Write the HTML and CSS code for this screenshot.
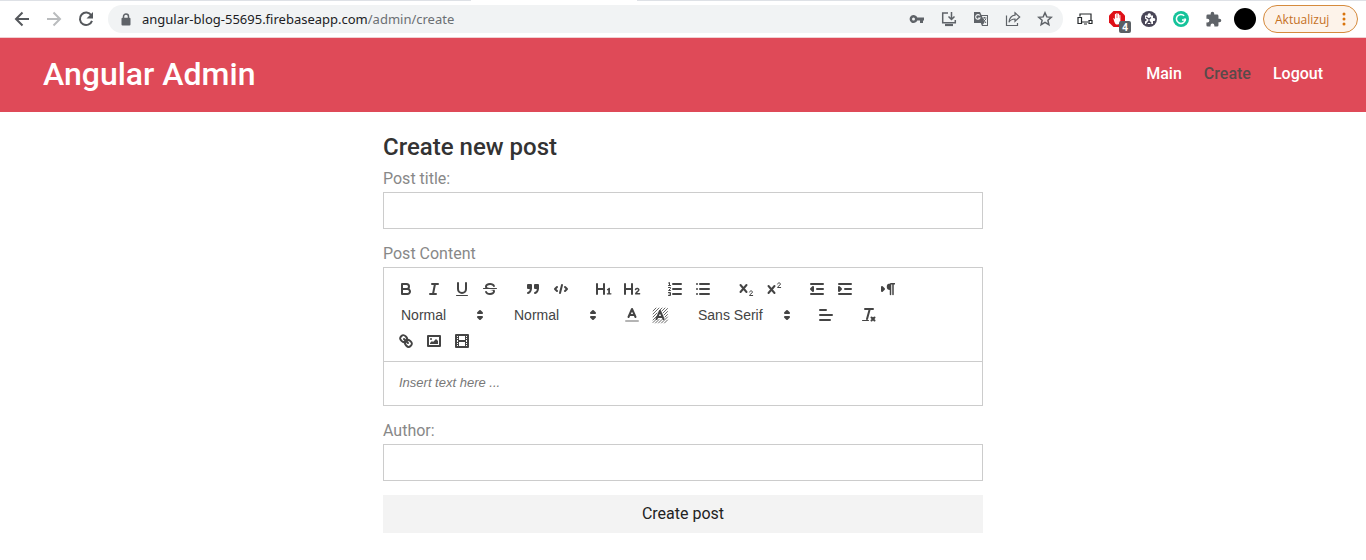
FILE: index.html
```html
<!DOCTYPE html>
<html lang="en">
<head>
<meta charset="utf-8">
<meta name="viewport" content="width=device-width, initial-scale=1">
<title>Angular Admin</title>
<link rel="stylesheet" href="styles.css">
</head>
<body>
<div class="browser">
  <div class="tab-strip"><span class="tab-active"></span></div>
  <div class="browser-bar">
    <div class="icon-row">
      <button class="bar-button" type="button" aria-label="Back"><svg width="16" height="16" viewBox="0 0 16 16" fill="none" stroke="#55585c" stroke-width="2"><path d="M15 8H2.500M8.500 1.500L2 8l6.500 6.500"/></svg></button>
      <button class="bar-button" type="button" aria-label="Forward"><svg width="16" height="16" viewBox="0 0 16 16" fill="none" stroke="#babcbe" stroke-width="2"><path d="M1 8h12.500M7.500 1.500L14 8l-6.500 6.500"/></svg></button>
      <button class="bar-button" type="button" aria-label="Reload"><svg width="16" height="16" viewBox="0 0 16 16"><path d="M13.300 4.300A6.200 6.200 0 1 0 14 9.800" fill="none" stroke="#55585c" stroke-width="2"/><path d="M15 1v6.500H8.500z" fill="#55585c"/></svg></button>
    </div>
    <div class="omnibox">
      <svg class="lock" width="10" height="13" viewBox="0 0 10 13"><path d="M2.500 5.500V3.500a2.500 2.500 0 0 1 5 0v2" fill="none" stroke="#5f6368" stroke-width="1.500"/><rect x="0.500" y="4.700" width="9" height="7.800" rx="1" fill="#5f6368"/></svg>
      <span class="url">angular-blog-55695.firebaseapp.com<span class="url-path">/admin/create</span></span>
      <div class="icon-row">
        <button class="bar-button" type="button" aria-label="Passwords"><svg width="16" height="16" viewBox="0 0 16 16"><path fill="#5f6368" fill-rule="evenodd" d="M8.300 6.500a4 4 0 1 0 0 3H11V12h3V9.500h1v-3zM4.500 6.500a1.500 1.500 0 1 1 0 3 1.500 1.500 0 0 1 0-3z"/></svg></button>
        <button class="bar-button" type="button" aria-label="Install app"><svg width="16" height="16" viewBox="0 0 16 16" fill="none" stroke="#5f6368" stroke-width="1.500"><path d="M7 2H1.700v9.800h12.600V9M10.500 1v7M7.500 5.500l3 3 3-3"/><path d="M4 14h8" stroke-width="2.200"/></svg></button>
        <button class="bar-button" type="button" aria-label="Translate"><svg width="16" height="16" viewBox="0 0 16 16"><path d="M1 1h6l1.500 3H15v11H9l-1.200-3H1z" fill="#5f6368"/><path d="M8.900 5H14v9H9.500l2-2.500z" fill="#f1f3f4"/><path d="M6.800 4.500A2.300 2.300 0 1 0 7 7H5.200" fill="none" stroke="#f1f3f4" stroke-width="1.100"/><path d="M9.500 7h4M11.500 6v1M10 8l3 4M13 8l-3 3" stroke="#5f6368" fill="none"/></svg></button>
        <button class="bar-button" type="button" aria-label="Share"><svg width="16" height="16" viewBox="0 0 16 16" fill="none" stroke="#5f6368" stroke-width="1.200"><path d="M1.500 4.500v10h11v-2.500"/><path d="M10 1.800l4.700 4.200L10 10.300V8C7 8 5.200 9 4 11.200 4.400 7.200 6.500 4.600 10 4.200z"/></svg></button>
        <button class="bar-button" type="button" aria-label="Bookmark"><svg width="16" height="16" viewBox="0 0 16 16" fill="none" stroke="#5f6368" stroke-width="1.500"><path d="M8 1.800l1.800 4.100 4.500.4-3.400 3 1 4.400L8 11.400l-3.900 2.300 1-4.400-3.400-3 4.500-.4z"/></svg></button>
      </div>
    </div>
    <div class="icon-row">
      <button class="bar-button" type="button" aria-label="Devices"><svg width="16" height="16" viewBox="0 0 16 16" fill="none" stroke="#25282b" stroke-width="1.200"><path d="M3 5.500V3h11v6M5 11h6M7 13h3"/><path d="M1 6.500h3.500v6H1zM12 9.500h3v3h-3z"/></svg></button>
      <button class="bar-button" type="button" aria-label="Ad blocker"><svg width="18" height="18" viewBox="0 0 18 18"><path d="M5.500 1h7L17 5.500v7L12.500 17h-7L1 12.500v-7z" fill="#df1018"/><path d="M5.200 8.200c.8-.3 1.200.4 1.700 1V4.400c0-.8 1.100-.8 1.100 0V8h.3V3.600c0-.8 1.200-.8 1.200 0V8h.3V4c0-.8 1.200-.8 1.200 0v4.300h.3V5.400c0-.8 1.100-.8 1.100 0V11c0 2-1.100 3.600-2.900 3.600-2.600 0-3-2.600-4.300-6.400z" fill="#fff"/></svg><span class="badge">4</span></button>
      <button class="bar-button" type="button" aria-label="Extension"><svg width="16" height="16" viewBox="0 0 16 16"><circle cx="8" cy="8" r="8" fill="#494657"/><path d="M4 4.500h2.800a1.600 1.600 0 1 1 3 0H12v2.800a1.500 1.500 0 1 1 0 2.600V13H4V10.500l2-1.500-2-1.500z" fill="#fff"/><path d="M5 6l3 2v2l-2.500 3M8 8l2-1.500M8 10l2.200 2.500" fill="none" stroke="#494657" stroke-width="1.200"/></svg></button>
      <button class="bar-button" type="button" aria-label="Grammar"><svg width="16" height="16" viewBox="0 0 16 16"><circle cx="8" cy="8" r="8" fill="#15c39a"/><path d="M11.200 4.800A4.500 4.500 0 1 0 12.300 9H9" fill="none" stroke="#fff" stroke-width="1.500"/><path d="M10.500 7.500h2.500v2.500z" fill="#fff"/></svg></button>
      <button class="bar-button" type="button" aria-label="Extensions"><svg width="17" height="17" viewBox="0 0 24 24"><path fill="#5f6368" d="M20.500 11H19V7a2 2 0 0 0-2-2h-4V3.500a2.500 2.500 0 0 0-5 0V5H4a2 2 0 0 0-2 2v3.800h1.500a2.700 2.700 0 0 1 0 5.400H2V20a2 2 0 0 0 2 2h3.800v-1.500a2.700 2.700 0 0 1 5.400 0V22H17a2 2 0 0 0 2-2v-4h1.500a2.500 2.500 0 0 0 0-5z"/></svg></button>
      <button class="bar-button" type="button" aria-label="Profile"><svg width="22" height="22" viewBox="0 0 22 22"><circle cx="11" cy="11" r="11"/></svg></button>
    </div>
    <button class="update" type="button">Aktualizuj<svg width="4" height="14" viewBox="0 0 4 14" fill="#d9730b"><circle cx="2" cy="2" r="1.500"/><circle cx="2" cy="7" r="1.500"/><circle cx="2" cy="12" r="1.500"/></svg></button>
  </div>
</div>

<header class="site-header">
  <h1 class="brand">Angular Admin</h1>
  <nav class="nav">
    <a class="nav-link" href="#main">Main</a>
    <a class="nav-link nav-link-active" href="#create">Create</a>
    <a class="nav-link" href="#logout">Logout</a>
  </nav>
</header>

<main class="page">
  <form class="post-form">
    <h2 class="form-title">Create new post</h2>
    <div class="field">
      <label class="label" for="title">Post title:</label>
      <input class="input" id="title" type="text">
    </div>
    <div class="field">
      <label class="label" for="content">Post Content</label>
      <div class="editor">
        <div class="toolbar">
          <div class="group">
            <button class="tool" type="button" aria-label="Bold"><svg viewBox="0 0 18 18"><path class="st" d="M5,4H9.500A2.500,2.500,0,0,1,12,6.500v0A2.500,2.500,0,0,1,9.500,9H5A0,0,0,0,1,5,9V4A0,0,0,0,1,5,4Z"/><path class="st" d="M5,9h5.500A2.500,2.500,0,0,1,13,11.500v0A2.500,2.500,0,0,1,10.500,14H5a0,0,0,0,1,0,0V9A0,0,0,0,1,5,9Z"/></svg></button>
            <button class="tool" type="button" aria-label="Italic"><svg viewBox="0 0 18 18"><path class="st" d="M7 4h6M5 14h6M8 14l2-10"/></svg></button>
            <button class="tool" type="button" aria-label="Underline"><svg viewBox="0 0 18 18"><path class="st" d="M5,3V9a4.012,4.012,0,0,0,4,4H9a4.012,4.012,0,0,0,4-4V3"/><rect class="fi" x="3" y="15" width="12" height="1" rx=".5"/></svg></button>
            <button class="tool" type="button" aria-label="Strike"><svg viewBox="0 0 18 18"><path class="st thin" d="M15.500 8.500h-13"/><path class="fi" d="M9.007,8C6.542,7.791,6,7.519,6,6.500,6,5.792,7.283,5,9,5c1.571,0,2.765.679,2.969,1.309a1,1,0,0,0,1.900-.617C13.356,4.106,11.354,3,9,3,6.200,3,4,4.538,4,6.500a3.200,3.200,0,0,0,.5,1.843Z"/><path class="fi" d="M8.984,10C11.457,10.208,12,10.479,12,11.500c0,.708-1.283,1.500-3,1.500-1.571,0-2.765-.679-2.969-1.309a1,1,0,1,0-1.900.617C4.644,13.894,6.646,15,9,15c2.800,0,5-1.538,5-3.500a3.200,3.200,0,0,0-.5-1.843Z"/></svg></button>
          </div>
          <div class="group">
            <button class="tool" type="button" aria-label="Blockquote"><svg viewBox="0 0 18 18"><path class="fi st" d="M4 5h3v3H4zM11 5h3v3h-3z"/><path class="st" d="M7,8c0,4.031-3,5-3,5M14,8c0,4.031-3,5-3,5"/></svg></button>
            <button class="tool" type="button" aria-label="Code block"><svg viewBox="0 0 18 18"><path class="st" d="M5 7L3 9l2 2M13 7l2 2-2 2M10 5L8 13"/></svg></button>
          </div>
          <div class="group">
            <button class="tool" type="button" aria-label="Heading 1"><svg viewBox="0 0 18 18"><path class="fi" d="M10,4V14a1,1,0,0,1-2,0V10H3v4a1,1,0,0,1-2,0V4A1,1,0,0,1,3,4V8H8V4a1,1,0,0,1,2,0Zm6.068,9.209H14.981V8.244a.387.387,0,0,0-.385-.385h-.638a.4.400,0,0,0-.264.111L12.100,9.353a.380.380,0,0,0-.11.550l.34.354a.367.367,0,0,0,.539.010l.319-.275v3.217H12.109a.389.389,0,0,0-.385.400v.4a.382.382,0,0,0,.385.400h3.959a.382.382,0,0,0,.385-.4v-.4A.389.389,0,0,0,16.068,13.209Z"/></svg></button>
            <button class="tool" type="button" aria-label="Heading 2"><svg viewBox="0 0 18 18"><path class="fi" d="M10,4V14a1,1,0,0,1-2,0V10H3v4a1,1,0,0,1-2,0V4A1,1,0,0,1,3,4V8H8V4a1,1,0,0,1,2,0Z"/><path class="st medium" d="M12.500 9.500c.4-1.500 3.600-1.300 3.300.5-.2 1.300-2.900 2.100-3.100 3.800h3.900"/></svg></button>
          </div>
          <div class="group">
            <button class="tool" type="button" aria-label="Ordered list"><svg viewBox="0 0 18 18"><path class="st" d="M7 4h8M7 9h8M7 14h8"/><path class="st thin" d="M2.500 5.500h2M3.500 5.500V2.500L2.500 3M2.500 7.500h2v1l-2 2h2M2.500 12.500h2v3h-2M3 14h1.500"/></svg></button>
            <button class="tool" type="button" aria-label="Bullet list"><svg viewBox="0 0 18 18"><path class="st" d="M6 4h9M6 9h9M6 14h9M3 4h0M3 9h0M3 14h0"/></svg></button>
          </div>
          <div class="group">
            <button class="tool" type="button" aria-label="Subscript"><svg viewBox="0 0 18 18"><path class="st" d="M3.500 5l6 7M9.500 5l-6 7"/><path class="st thin" d="M12.500 12c.3-1.700 3.200-1.500 2.900.3-.2 1.100-2.500 1.700-2.900 3.200h3.200"/></svg></button>
            <button class="tool" type="button" aria-label="Superscript"><svg viewBox="0 0 18 18"><path class="st" d="M3.500 6l6 7M9.500 6l-6 7"/><path class="st thin" d="M12.500 4c.3-1.700 3.200-1.500 2.900.3-.2 1.100-2.500 1.700-2.900 3.200h3.200"/></svg></button>
          </div>
          <div class="group">
            <button class="tool" type="button" aria-label="Outdent"><svg viewBox="0 0 18 18"><path class="st" d="M3 14h12M3 4h12M9 9h6"/><path class="fi st" d="M5 7v4L3 9z"/></svg></button>
            <button class="tool" type="button" aria-label="Indent"><svg viewBox="0 0 18 18"><path class="st" d="M3 14h12M3 4h12M9 9h6"/><path class="fi st" d="M3 7v4l2-2z"/></svg></button>
          </div>
          <div class="group">
            <button class="tool" type="button" aria-label="Text direction"><svg viewBox="0 0 18 18"><path class="fi st" d="M3 11l2-2-2-2z"/><path class="fi" d="M11 3.500a3 3 0 0 0 0 6.500h1V3.500zM11 3h5v1.500h-5z"/><path class="st medium" d="M11.500 4v10.500M14 4v10.500"/></svg></button>
          </div>
          <div class="group">
            <div class="picker">
              <select class="select" aria-label="Heading"><option>Normal</option><option>Heading 1</option><option>Heading 2</option></select>
              <svg class="picker-arrows" viewBox="0 0 18 18"><path class="fi st" d="M7 11l2 2 2-2zM7 7l2-2 2 2z"/></svg>
            </div>
          </div>
          <div class="group">
            <div class="picker">
              <select class="select" aria-label="Size"><option>Normal</option><option>Small</option><option>Large</option></select>
              <svg class="picker-arrows" viewBox="0 0 18 18"><path class="fi st" d="M7 11l2 2 2-2zM7 7l2-2 2 2z"/></svg>
            </div>
          </div>
          <div class="group">
            <button class="tool" type="button" aria-label="Text color"><svg viewBox="0 0 18 18"><path class="st faint" d="M3 15h12"/><path class="st" d="M5.500 11L9 3l3.500 8M11.630 9H6.380"/></svg></button>
            <button class="tool" type="button" aria-label="Background color"><svg viewBox="0 0 18 18"><path class="st hatch" d="M2 5l3-3M2 8l6-6M2 11l4-4M8 5l3-3M2 14l4-4M11 5l3-3M2 16.500l3-3M4.500 17l3.500-3.500M12 7l4.500-4.500M7.500 17l3.500-3.500M13 9l3.500-3.500M10.500 17l6-6M13.500 17l3-3M14 11l2.500-2.500"/><path class="st" d="M5.500 13L9 5l3.500 8M11.630 11H6.380"/></svg></button>
          </div>
          <div class="group">
            <div class="picker picker-font">
              <select class="select" aria-label="Font"><option>Sans Serif</option><option>Serif</option><option>Monospace</option></select>
              <svg class="picker-arrows" viewBox="0 0 18 18"><path class="fi st" d="M7 11l2 2 2-2zM7 7l2-2 2 2z"/></svg>
            </div>
          </div>
          <div class="group">
            <button class="tool" type="button" aria-label="Align"><svg viewBox="0 0 18 18"><path class="st" d="M3 9h12M3 14h10M3 4h6"/></svg></button>
          </div>
          <div class="group">
            <button class="tool" type="button" aria-label="Clear formatting"><svg viewBox="0 0 18 18"><path class="st" d="M5 3h8M7 13L9.500 4M11.500 11.500l3 3M14.500 11.500l-3 3"/><rect class="fi" x="2" y="14" width="7" height="1" rx=".5"/></svg></button>
          </div>
          <div class="group">
            <button class="tool" type="button" aria-label="Link"><svg viewBox="0 0 18 18"><path class="st" d="M7 7l4 4"/><path class="st" d="M8.900,4.577a3.476,3.476,0,0,1,.36,4.679A3.476,3.476,0,0,1,4.577,8.900C3.185,7.500,2.035,6.400,4.217,4.217S7.500,3.185,8.900,4.577Z"/><path class="st" d="M13.423,9.100a3.476,3.476,0,0,0-4.679-.36,3.476,3.476,0,0,0,.36,4.679c1.392,1.392,2.500,2.542,4.679.36S14.815,10.500,13.423,9.100Z"/></svg></button>
            <button class="tool" type="button" aria-label="Image"><svg viewBox="0 0 18 18"><rect class="st" x="3" y="4" width="12" height="10"/><circle class="fi" cx="6" cy="7" r="1"/><path class="fi" d="M5 12V11L7 9 8 10 11 7 13 9v3z"/></svg></button>
            <button class="tool" type="button" aria-label="Video"><svg viewBox="0 0 18 18"><rect class="st" x="3" y="3" width="12" height="12"/><path class="fi" d="M5 3h1v12H5zM12 3h1v12h-1zM5 8h8v2H5zM3 5h3v1H3zM3 7h3v1H3zM3 10h3v1H3zM3 12h3v1H3zM12 5h3v1h-3zM12 7h3v1h-3zM12 10h3v1h-3zM12 12h3v1h-3z"/></svg></button>
          </div>
        </div>
        <textarea class="editor-text" id="content" rows="1" placeholder="Insert text here ..."></textarea>
      </div>
    </div>
    <div class="field">
      <label class="label" for="author">Author:</label>
      <input class="input" id="author" type="text">
    </div>
    <button class="submit" type="submit">Create post</button>
  </form>
</main>
</body>
</html>
```
FILE: styles.css
```css
* {
  box-sizing: border-box;
}

body {
  margin: 0;
  background: #fff;
  color: #333;
  font-family: Roboto, "Liberation Sans", sans-serif;
  font-size: 16px;
}

button,
input,
select,
textarea {
  font: inherit;
  margin: 0;
}

svg {
  display: block;
}

/* Browser bar */
.browser {
  border-bottom: 1px solid #f0d0d3;
  font-family: "Noto Sans", "Open Sans", sans-serif;
}

.tab-strip {
  display: flex;
  height: 1px;
  padding-left: 471px;
  background: #dee1e6;
}

.tab-active {
  width: 166px;
  background: #fff;
}

.browser-bar {
  display: flex;
  align-items: center;
  gap: 6px;
  padding: 4px 8px 4px 6px;
}

.icon-row {
  display: flex;
}

.bar-button {
  position: relative;
  display: flex;
  align-items: center;
  justify-content: center;
  width: 32px;
  height: 28px;
  padding: 0;
  border: 0;
  background: none;
}

.omnibox {
  display: flex;
  flex: 1;
  align-items: center;
  min-width: 0;
  height: 28px;
  padding: 0 2px 0 13px;
  border-radius: 14px;
  background: #f1f3f4;
}

.lock {
  margin-right: 11px;
}

.url {
  flex: 1;
  overflow: hidden;
  color: #202124;
  font-size: 13px;
  line-height: 20px;
  white-space: nowrap;
}

.url-path {
  color: #6b6f73;
}

.badge {
  position: absolute;
  right: 2px;
  bottom: 0;
  width: 12px;
  border-radius: 2px;
  background: #5a5f64;
  color: #fff;
  font-size: 10px;
  font-weight: 700;
  line-height: 12px;
  text-align: center;
}

.update {
  display: flex;
  align-items: center;
  justify-content: space-between;
  width: 95px;
  height: 28px;
  margin-left: -4px;
  padding: 0 11px;
  border: 1px solid #d58a3c;
  border-radius: 14px;
  background: #fdf3ea;
  color: #c5701f;
  font-family: "Open Sans", "Noto Sans", sans-serif;
  font-size: 12px;
}

/* Site header */
.site-header {
  display: flex;
  align-items: center;
  justify-content: space-between;
  padding: 15px 43px 17px;
  background: #df4a58;
}

.brand {
  margin: 0;
  color: #fff;
  font-size: 32px;
  font-weight: 500;
  line-height: 42px;
}

.nav {
  display: flex;
  gap: 22px;
}

.nav-link {
  color: #fff;
  font-weight: 500;
  line-height: 22px;
  text-decoration: none;
}

.nav-link-active {
  color: #5a4a4a;
}

/* Form */
.page {
  padding: 20px 16px;
}

.post-form {
  max-width: 600px;
  margin: 0 auto;
}

.form-title {
  margin: 0 0 6px;
  font-size: 24px;
  font-weight: 500;
  line-height: 30px;
}

.field {
  margin-bottom: 14px;
}

.label {
  display: block;
  margin-bottom: 2px;
  color: #888;
  line-height: 22px;
}

.input {
  display: block;
  width: 100%;
  height: 37px;
  padding: 8px;
  border: 1px solid #ccc;
  border-radius: 0;
}

.editor {
  border: 1px solid #ccc;
  font-family: "Liberation Sans", Arial, sans-serif;
}

.toolbar {
  display: flex;
  flex-wrap: wrap;
  gap: 2px 15px;
  padding: 9px 60px 8px 8px;
  border-bottom: 1px solid #ccc;
}

.group {
  display: flex;
}

.tool {
  width: 28px;
  height: 24px;
  padding: 3px 5px;
  border: 0;
  background: none;
}

.st {
  fill: none;
  stroke: #444;
  stroke-width: 2;
  stroke-linecap: round;
  stroke-linejoin: round;
}

.fi,
.fi.st {
  fill: #444;
}

.medium {
  stroke-width: 1.5;
}

.thin {
  stroke-width: 1;
}

.hatch {
  stroke-width: 1;
  opacity: 0.8;
}

.faint {
  opacity: 0.4;
}

.picker {
  position: relative;
  width: 98px;
  height: 24px;
}

.picker-font {
  width: 108px;
}

.select {
  width: 100%;
  height: 24px;
  padding: 0 20px 0 9px;
  border: 0;
  appearance: none;
  background: none;
  color: #444;
  font-size: 14px;
}

.picker-arrows {
  position: absolute;
  top: 3px;
  right: 1px;
  width: 18px;
  height: 18px;
  pointer-events: none;
}

.editor-text {
  display: block;
  width: 100%;
  height: 43px;
  padding: 12px 15px;
  border: 0;
  resize: none;
  background: none;
  font-size: 13px;
  line-height: 18px;
}

.editor-text::placeholder {
  color: #777;
  font-style: italic;
}

.submit {
  width: 100%;
  padding: 9px;
  border: 0;
  background: #f3f3f3;
  color: #222;
  line-height: 20px;
}
```
